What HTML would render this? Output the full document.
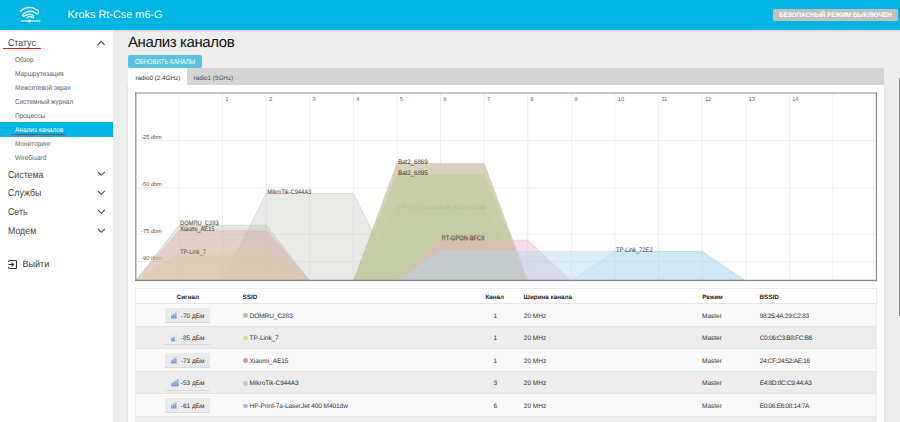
<!DOCTYPE html>
<html><head><meta charset="utf-8">
<style>
*{margin:0;padding:0;box-sizing:border-box}
html,body{width:900px;height:422px;overflow:hidden;background:#ededed;font-family:"Liberation Sans",sans-serif;text-rendering:geometricPrecision}
body{position:relative}
.a{position:absolute;white-space:nowrap;line-height:1}
#hdr{position:absolute;left:0;top:0;width:900px;height:29.5px;background:#00b5e2;box-shadow:0 1px 1.5px rgba(0,0,0,.12);z-index:3}
#side{position:absolute;left:0;top:29px;width:113px;height:393px;background:#fff;z-index:1}
#panel{position:absolute;left:127px;top:85px;width:758px;height:337px;background:#fff;border-left:1px solid #e2e2e2;border-right:1px solid #e2e2e2}
.sub{font-size:7px;color:#606060;left:15px;transform:scaleX(.925);transform-origin:0 0}
.sec{font-size:9.9px;color:#444;left:8px;transform:scaleX(.89);transform-origin:0 0}
.chev{position:absolute;left:97.5px;width:7.5px;height:4px}
.th{font-size:6.3px;font-weight:bold;color:#222}
.td{font-size:6.5px;color:#333}
</style></head><body>
<div id="hdr">
  <svg class="a" style="left:0;top:0" width="60" height="30" viewBox="0 0 60 30" fill="none" stroke="#fff">
    <path d="M20.2 11.2 Q29.2 4.0 37.9 10.6 Q39.6 12.4 37.6 13.7 Q36.8 14.1 35.6 13.0 Q29.2 8.4 23.0 14.6 Q22.3 15.6 23.2 16.2 Q24.0 16.6 25.0 15.8 Q29.0 12.4 33.0 15.6 Q34.2 16.8 33.2 17.4 Q32.6 17.8 31.6 17.0 Q29.2 15.6 26.9 17.9" stroke-width="1.25" stroke-linecap="round" stroke-linejoin="round"/>
    <path d="M21 21 H40.4" stroke-width="1.6" stroke-opacity=".7"/>
    <circle cx="29.3" cy="21" r="1.6" fill="#fff" stroke="none"/>
  </svg>
  <div class="a" style="left:67.6px;top:10.2px;font-size:10.9px;color:#fff">Kroks Rt-Cse m6-G</div>
  <div class="a" style="left:773px;top:8.7px;width:124.7px;height:12px;background:#bfbfbf;border-radius:1.5px"></div>
  <div class="a" style="left:779px;top:13.2px;font-size:6.4px;font-weight:bold;color:#fff;letter-spacing:-0.05px">БЕЗОПАСНЫЙ РЕЖИМ ВЫКЛЮЧЕН</div>
</div>

<div id="side">
</div>
<div class="a sec" style="top:39.4px;z-index:2">Статус</div>
<div class="a" style="left:2.5px;top:48px;width:38.5px;height:1.4px;background:#e8131b;z-index:2"></div>
<svg class="a" style="left:97px;top:40px;z-index:2" width="9" height="6"><path d="M0.8 4.9 L4.2 1.3 L7.6 4.9" fill="none" stroke="#4a4a4a" stroke-width="1.15"/></svg>
<div class="a sub" style="top:57.0px;z-index:2">Обзор</div>
<div class="a sub" style="top:70.7px;z-index:2">Маршрутизация</div>
<div class="a sub" style="top:84.7px;z-index:2">Межсетевой экран</div>
<div class="a sub" style="top:98.7px;z-index:2">Системный журнал</div>
<div class="a sub" style="top:112.7px;z-index:2">Процессы</div>
<div class="a" style="left:0;top:122.3px;width:113px;height:14.3px;background:#00b5e2;z-index:2"></div>
<div class="a sub" style="top:126.6px;color:#fff;z-index:2">Анализ каналов</div>
<div class="a" style="left:11.4px;top:134px;width:54px;height:1.3px;background:#c2314e;z-index:2"></div>
<div class="a sub" style="top:140.7px;z-index:2">Мониторинг</div>
<div class="a sub" style="top:154.7px;z-index:2">WireGuard</div>
<div class="a sec" style="top:170.6px;z-index:2">Система</div>
<div class="a sec" style="top:189.4px;z-index:2">Службы</div>
<div class="a sec" style="top:208.4px;z-index:2">Сеть</div>
<div class="a sec" style="top:227.4px;z-index:2">Модем</div>
<svg class="a" style="left:0;top:0;z-index:2" width="113" height="280">
  <g fill="none" stroke="#4a4a4a" stroke-width="1.15">
  <path d="M97.8 171.8 L101.3 175.3 L104.8 171.8"/>
  <path d="M97.8 190.8 L101.3 194.3 L104.8 190.8"/>
  <path d="M97.8 209.8 L101.3 213.3 L104.8 209.8"/>
  <path d="M97.8 228.8 L101.3 232.3 L104.8 228.8"/>
  </g>
  <g fill="none" stroke="#333" stroke-width="1.1">
  <path d="M10 260.5 H15.8 Q16.5 260.5 16.5 261.2 V267.8 Q16.5 268.5 15.8 268.5 H10 Q8.4 268.5 8.4 267 M8.4 262 Q8.4 260.5 10 260.5"/>
  <path d="M8.5 264.5 H13.5 M11.5 262.6 L13.6 264.5 L11.5 266.4"/>
  </g>
</svg>
<div class="a" style="left:22.6px;top:259.8px;font-size:9px;color:#333;z-index:2">Выйти</div>

<div id="panel"></div>
<div class="a" style="left:128px;top:35.3px;font-size:15px;letter-spacing:-0.4px;color:#111">Анализ каналов</div>
<div class="a" style="left:128px;top:54.7px;width:73.5px;height:13.4px;background:#5bc0de;border-radius:2px"></div>
<div class="a" style="left:134.6px;top:58.3px;font-size:7.2px;color:#fff;transform:scaleX(.83);transform-origin:0 0">ОБНОВИТЬ КАНАЛЫ</div>
<div class="a" style="left:128px;top:68.4px;width:756px;height:16.6px;background:#d4d4d4"></div>
<div class="a" style="left:128px;top:68.4px;width:59px;height:16.8px;background:#fff"></div>
<div class="a" style="left:135.5px;top:75.6px;font-size:6.3px;color:#333">radio0 (2.4GHz)</div>
<div class="a" style="left:193.6px;top:75.6px;font-size:6.3px;color:#444">radio1 (5GHz)</div>

<svg class="a" style="left:0;top:0" width="900" height="422" font-family="Liberation Sans">
  <rect x="135.5" y="93" width="741" height="187.4" fill="#fff"/>
  <!--CHART--><g stroke="#ebebeb" stroke-width="0.85"><line x1="179.0" y1="94" x2="179.0" y2="280.3"/><line x1="222.6" y1="94" x2="222.6" y2="280.3"/><line x1="266.2" y1="94" x2="266.2" y2="280.3"/><line x1="309.8" y1="94" x2="309.8" y2="280.3"/><line x1="353.4" y1="94" x2="353.4" y2="280.3"/><line x1="397.0" y1="94" x2="397.0" y2="280.3"/><line x1="440.6" y1="94" x2="440.6" y2="280.3"/><line x1="484.2" y1="94" x2="484.2" y2="280.3"/><line x1="527.8" y1="94" x2="527.8" y2="280.3"/><line x1="571.4" y1="94" x2="571.4" y2="280.3"/><line x1="615.0" y1="94" x2="615.0" y2="280.3"/><line x1="658.6" y1="94" x2="658.6" y2="280.3"/><line x1="702.2" y1="94" x2="702.2" y2="280.3"/><line x1="745.8" y1="94" x2="745.8" y2="280.3"/><line x1="789.4" y1="94" x2="789.4" y2="280.3"/><line x1="833.0" y1="94" x2="833.0" y2="280.3"/><line x1="136.2" y1="140.6" x2="876" y2="140.6"/><line x1="136.2" y1="187.8" x2="876" y2="187.8"/><line x1="136.2" y1="234.3" x2="876" y2="234.3"/><line x1="136.2" y1="261.6" x2="876" y2="261.6"/></g>
<g fill="#555" font-size="5.8" letter-spacing="-0.1"><text x="141.2" y="138.8">-25 dbm</text><text x="141.2" y="186.0">-50 dbm</text><text x="141.2" y="232.5">-75 dbm</text><text x="141.2" y="259.8">-90 dbm</text><text x="225.4" y="101" fill="#7a5e58">1</text><text x="269.0" y="101" fill="#7a5e58">2</text><text x="312.6" y="101" fill="#7a5e58">3</text><text x="356.2" y="101" fill="#7a5e58">4</text><text x="399.8" y="101" fill="#7a5e58">5</text><text x="443.4" y="101" fill="#7a5e58">6</text><text x="487.0" y="101" fill="#7a5e58">7</text><text x="530.6" y="101" fill="#7a5e58">8</text><text x="574.2" y="101" fill="#7a5e58">9</text><text x="617.8" y="101" fill="#7a5e58">10</text><text x="661.4" y="101" fill="#7a5e58">11</text><text x="705.0" y="101" fill="#7a5e58">12</text><text x="748.6" y="101" fill="#7a5e58">13</text><text x="792.2" y="101" fill="#7a5e58">14</text></g>
<g><polyline points="222.6,281 266.2,193.4 353.4,193.4 397.0,281" fill="#c4c5c0" fill-opacity="0.38" stroke="#c4c5c0" stroke-width=".5"/><text x="267.5" y="193.9" fill="#000" fill-opacity=".3" font-size="6.6" textLength="44" lengthAdjust="spacingAndGlyphs">MikroTik-C944A3</text><text x="267.2" y="193.5" fill="#5e5a50" font-size="6.6" textLength="44" lengthAdjust="spacingAndGlyphs">MikroTik-C944A3</text></g>
<g><polyline points="135.4,281 179.0,225.2 266.2,225.2 309.8,281" fill="#bcc6b0" fill-opacity="0.42" stroke="#bcc6b0" stroke-width=".5"/><text x="180.3" y="225.8" fill="#000" fill-opacity=".3" font-size="6.6" textLength="38.6" lengthAdjust="spacingAndGlyphs">DOMRU_C283</text><text x="180.0" y="225.3" fill="#555a4a" font-size="6.6" textLength="38.6" lengthAdjust="spacingAndGlyphs">DOMRU_C283</text></g>
<g><polyline points="135.4,281 179.0,230.9 266.2,230.9 309.8,281" fill="#dcb0aa" fill-opacity="0.42" stroke="#dcb0aa" stroke-width=".5"/><text x="180.3" y="231.4" fill="#000" fill-opacity=".3" font-size="6.6" textLength="34.4" lengthAdjust="spacingAndGlyphs">Xiaomi_AE15</text><text x="180.0" y="231.0" fill="#6a4038" font-size="6.6" textLength="34.4" lengthAdjust="spacingAndGlyphs">Xiaomi_AE15</text></g>
<g><polyline points="135.4,281 179.0,253.4 266.2,253.4 309.8,281" fill="#dccba8" fill-opacity="0.5" stroke="#dccba8" stroke-width=".5"/><text x="180.3" y="253.9" fill="#000" fill-opacity=".3" font-size="6.6" textLength="26" lengthAdjust="spacingAndGlyphs">TP-Link_7</text><text x="180.0" y="253.5" fill="#7a6a38" font-size="6.6" textLength="26" lengthAdjust="spacingAndGlyphs">TP-Link_7</text></g>
<g><polyline points="353.4,281 397.0,208.4 484.2,208.4 527.8,281" fill="#a9b9d2" fill-opacity="0.45" stroke="#a9b9d2" stroke-width=".5"/><text x="398.3" y="208.9" fill="#000" fill-opacity=".3" font-size="6.6" textLength="88" lengthAdjust="spacingAndGlyphs">HP-Print-7a-LaserJet 400 M401dw</text><text x="398.0" y="208.5" fill="#404850" font-size="6.6" textLength="88" lengthAdjust="spacingAndGlyphs">HP-Print-7a-LaserJet 400 M401dw</text></g>
<g><polyline points="353.4,281 397.0,163.4 484.2,163.4 527.8,281" fill="#c9bda2" fill-opacity="0.7" stroke="#c9bda2" stroke-width=".5"/><text x="398.3" y="163.9" fill="#000" fill-opacity=".3" font-size="6.6" textLength="29.6" lengthAdjust="spacingAndGlyphs">Bat2_6869</text><text x="398.0" y="163.5" fill="#4a3a28" font-size="6.6" textLength="29.6" lengthAdjust="spacingAndGlyphs">Bat2_6869</text></g>
<g><polyline points="353.4,281 397.0,174.6 484.2,174.6 527.8,281" fill="#c0cf9c" fill-opacity="0.72" stroke="#c0cf9c" stroke-width=".5"/><text x="398.3" y="175.1" fill="#000" fill-opacity=".3" font-size="6.6" textLength="29.6" lengthAdjust="spacingAndGlyphs">Bat2_6895</text><text x="398.0" y="174.7" fill="#48502c" font-size="6.6" textLength="29.6" lengthAdjust="spacingAndGlyphs">Bat2_6895</text></g>
<g><polyline points="397.0,281 440.6,240.2 527.8,240.2 571.4,281" fill="#e6b4c8" fill-opacity="0.45" stroke="#e6b4c8" stroke-width=".5"/><text x="441.9" y="240.8" fill="#000" fill-opacity=".3" font-size="6.6" textLength="42.8" lengthAdjust="spacingAndGlyphs">RT-GPON-BFC8</text><text x="441.6" y="240.3" fill="#703848" font-size="6.6" textLength="42.8" lengthAdjust="spacingAndGlyphs">RT-GPON-BFC8</text></g>
<polyline points="397.0,281 440.6,251.5 702.2,251.5 745.8,281" fill="#b4d6ea" fill-opacity="0.45" stroke="#b4d6ea" stroke-width=".5"/>
<g><polyline points="571.4,281 615.0,251.5 702.2,251.5 745.8,281" fill="#b4d6ea" fill-opacity="0.3" stroke="#b4d6ea" stroke-width=".5"/><text x="616.3" y="252.0" fill="#000" fill-opacity=".3" font-size="6.6" textLength="36.6" lengthAdjust="spacingAndGlyphs">TP-Link_72E2</text><text x="616.0" y="251.6" fill="#4a5a68" font-size="6.6" textLength="36.6" lengthAdjust="spacingAndGlyphs">TP-Link_72E2</text></g><!--/CHART-->
  <g fill="none"><path d="M135 93.0 H877" stroke="#b3b3b3" stroke-width="1.4"/><path d="M135.8 92.5 V281" stroke="#8c8c8c" stroke-width="1.2"/><path d="M876.4 92.5 V281" stroke="#8c8c8c" stroke-width="1.2"/><path d="M135.2 280.4 H877" stroke="#8a8a8a" stroke-width="1.3"/><path d="M136 281.6 H878" stroke="#000" stroke-opacity=".08" stroke-width="1"/></g>
</svg>
<!--TABLE--><div class="a" style="left:135.2px;top:288.3px;width:741.4px;height:140px;background:#fff;border:1px solid #ececec;border-bottom:none"></div>
<div class="a th" style="left:176.6px;top:294.8px">Сигнал</div>
<div class="a th" style="left:242.6px;top:294.8px">SSID</div>
<div class="a th" style="left:485.4px;top:294.8px">Канал</div>
<div class="a th" style="left:523.6px;top:294.8px">Ширина канала</div>
<div class="a th" style="left:702.3px;top:294.8px">Режим</div>
<div class="a th" style="left:759.5px;top:294.8px">BSSID</div>
<div class="a" style="left:136px;top:303.0px;width:740px;height:22.6px;background:#f9f9f9;border-top:1px solid #e4e4e4"></div>
<div class="a" style="left:165.1px;top:307.5px;width:45px;height:15.4px;background:#ebebeb;border-bottom:1px solid #d9d9d9"></div>
<svg class="a" style="left:171px;top:310.9px" width="9" height="8"><defs><linearGradient id="sg" x1="0" y1="0" x2="0" y2="1"><stop offset="0" stop-color="#9cc0ee"/><stop offset="1" stop-color="#5f95dc"/></linearGradient></defs><rect x="0.00" y="3.80" width="1.95" height="3.60" fill="url(#sg)"/><rect x="1.90" y="2.60" width="1.95" height="4.80" fill="url(#sg)"/><rect x="3.80" y="1.40" width="1.95" height="6.00" fill="url(#sg)"/><rect x="5.95" y="0.35" width="1.5" height="6.80" fill="#f6f6f6" stroke="#d6d6d6" stroke-width=".5"/></svg>
<div class="a td" style="left:180.8px;top:313.5px">-70 дБм</div>
<div class="a" style="left:243px;top:313.2px;width:4.6px;height:4.6px;border-radius:50%;background:#b9c0a8"></div>
<div class="a td" style="left:249.6px;top:313.5px;letter-spacing:-0.06px">DOMRU_C283</div>
<div class="a td" style="left:493.6px;top:313.5px">1</div>
<div class="a td" style="left:523.8px;top:313.5px">20 MHz</div>
<div class="a td" style="left:702px;top:313.5px">Master</div>
<div class="a td" style="left:759.7px;top:313.5px;letter-spacing:-0.3px">98:25:4A:29:C2:83</div>
<div class="a" style="left:136px;top:325.6px;width:740px;height:22.6px;background:#ececec;border-top:1px solid #e4e4e4"></div>
<div class="a" style="left:165.1px;top:330.1px;width:45px;height:15.4px;background:#ebebeb;border-bottom:1px solid #d9d9d9"></div>
<svg class="a" style="left:171px;top:333.5px" width="9" height="8"><defs><linearGradient id="sg" x1="0" y1="0" x2="0" y2="1"><stop offset="0" stop-color="#9cc0ee"/><stop offset="1" stop-color="#5f95dc"/></linearGradient></defs><rect x="0.00" y="3.80" width="1.95" height="3.60" fill="url(#sg)"/><rect x="1.90" y="2.60" width="1.95" height="4.80" fill="url(#sg)"/><rect x="4.05" y="1.65" width="1.5" height="5.50" fill="#f6f6f6" stroke="#d6d6d6" stroke-width=".5"/><rect x="5.95" y="0.35" width="1.5" height="6.80" fill="#f6f6f6" stroke="#d6d6d6" stroke-width=".5"/></svg>
<div class="a td" style="left:180.8px;top:336.1px">-85 дБм</div>
<div class="a" style="left:243px;top:335.8px;width:4.6px;height:4.6px;border-radius:50%;background:#e2dc80"></div>
<div class="a td" style="left:249.6px;top:336.1px;letter-spacing:-0.06px">TP-Link_7</div>
<div class="a td" style="left:493.6px;top:336.1px">1</div>
<div class="a td" style="left:523.8px;top:336.1px">20 MHz</div>
<div class="a td" style="left:702px;top:336.1px">Master</div>
<div class="a td" style="left:759.7px;top:336.1px;letter-spacing:-0.3px">C0:06:C3:B8:FC:B6</div>
<div class="a" style="left:136px;top:348.2px;width:740px;height:22.6px;background:#f9f9f9;border-top:1px solid #e4e4e4"></div>
<div class="a" style="left:165.1px;top:352.7px;width:45px;height:15.4px;background:#ebebeb;border-bottom:1px solid #d9d9d9"></div>
<svg class="a" style="left:171px;top:356.1px" width="9" height="8"><defs><linearGradient id="sg" x1="0" y1="0" x2="0" y2="1"><stop offset="0" stop-color="#9cc0ee"/><stop offset="1" stop-color="#5f95dc"/></linearGradient></defs><rect x="0.00" y="3.80" width="1.95" height="3.60" fill="url(#sg)"/><rect x="1.90" y="2.60" width="1.95" height="4.80" fill="url(#sg)"/><rect x="3.80" y="1.40" width="1.95" height="6.00" fill="url(#sg)"/><rect x="5.95" y="0.35" width="1.5" height="6.80" fill="#f6f6f6" stroke="#d6d6d6" stroke-width=".5"/></svg>
<div class="a td" style="left:180.8px;top:358.7px">-73 дБм</div>
<div class="a" style="left:243px;top:358.4px;width:4.6px;height:4.6px;border-radius:50%;background:#e3999a"></div>
<div class="a td" style="left:249.6px;top:358.7px;letter-spacing:-0.06px">Xiaomi_AE15</div>
<div class="a td" style="left:493.6px;top:358.7px">1</div>
<div class="a td" style="left:523.8px;top:358.7px">20 MHz</div>
<div class="a td" style="left:702px;top:358.7px">Master</div>
<div class="a td" style="left:759.7px;top:358.7px;letter-spacing:-0.3px">24:CF:24:52:AE:16</div>
<div class="a" style="left:136px;top:370.8px;width:740px;height:22.6px;background:#ececec;border-top:1px solid #e4e4e4"></div>
<div class="a" style="left:165.1px;top:375.3px;width:45px;height:15.4px;background:#ebebeb;border-bottom:1px solid #d9d9d9"></div>
<svg class="a" style="left:171px;top:378.7px" width="9" height="8"><defs><linearGradient id="sg" x1="0" y1="0" x2="0" y2="1"><stop offset="0" stop-color="#9cc0ee"/><stop offset="1" stop-color="#5f95dc"/></linearGradient></defs><rect x="0.00" y="3.80" width="1.95" height="3.60" fill="url(#sg)"/><rect x="1.90" y="2.60" width="1.95" height="4.80" fill="url(#sg)"/><rect x="3.80" y="1.40" width="1.95" height="6.00" fill="url(#sg)"/><rect x="5.70" y="0.10" width="1.95" height="7.30" fill="url(#sg)"/></svg>
<div class="a td" style="left:180.8px;top:381.3px">-53 дБм</div>
<div class="a" style="left:243px;top:381.0px;width:4.6px;height:4.6px;border-radius:50%;background:#c3c7bc"></div>
<div class="a td" style="left:249.6px;top:381.3px;letter-spacing:-0.06px">MikroTik-C944A3</div>
<div class="a td" style="left:493.6px;top:381.3px">3</div>
<div class="a td" style="left:523.8px;top:381.3px">20 MHz</div>
<div class="a td" style="left:702px;top:381.3px">Master</div>
<div class="a td" style="left:759.7px;top:381.3px;letter-spacing:-0.3px">E4:8D:8C:C9:44:A3</div>
<div class="a" style="left:136px;top:393.4px;width:740px;height:22.6px;background:#f9f9f9;border-top:1px solid #e4e4e4"></div>
<div class="a" style="left:165.1px;top:397.9px;width:45px;height:15.4px;background:#ebebeb;border-bottom:1px solid #d9d9d9"></div>
<svg class="a" style="left:171px;top:401.3px" width="9" height="8"><defs><linearGradient id="sg" x1="0" y1="0" x2="0" y2="1"><stop offset="0" stop-color="#9cc0ee"/><stop offset="1" stop-color="#5f95dc"/></linearGradient></defs><rect x="0.00" y="3.80" width="1.95" height="3.60" fill="url(#sg)"/><rect x="1.90" y="2.60" width="1.95" height="4.80" fill="url(#sg)"/><rect x="3.80" y="1.40" width="1.95" height="6.00" fill="url(#sg)"/><rect x="5.95" y="0.35" width="1.5" height="6.80" fill="#f6f6f6" stroke="#d6d6d6" stroke-width=".5"/></svg>
<div class="a td" style="left:180.8px;top:403.9px">-61 дБм</div>
<div class="a" style="left:243px;top:403.6px;width:4.6px;height:4.6px;border-radius:50%;background:#a8b8d0"></div>
<div class="a td" style="left:249.6px;top:403.9px;letter-spacing:-0.06px">HP-Print-7a-LaserJet 400 M401dw</div>
<div class="a td" style="left:493.6px;top:403.9px">6</div>
<div class="a td" style="left:523.8px;top:403.9px">20 MHz</div>
<div class="a td" style="left:702px;top:403.9px">Master</div>
<div class="a td" style="left:759.7px;top:403.9px;letter-spacing:-0.3px">E0:06:E6:08:14:7A</div>
<div class="a" style="left:136px;top:416.0px;width:740px;height:22.6px;background:#ececec;border-top:1px solid #e4e4e4"></div>
<div class="a" style="left:165.1px;top:420.5px;width:45px;height:15.4px;background:#ebebeb;border-bottom:1px solid #d9d9d9"></div><!--/TABLE-->
<div class="a" style="left:898.6px;top:78px;width:1.2px;height:238px;background:#8a8a8a"></div>
</body></html>
